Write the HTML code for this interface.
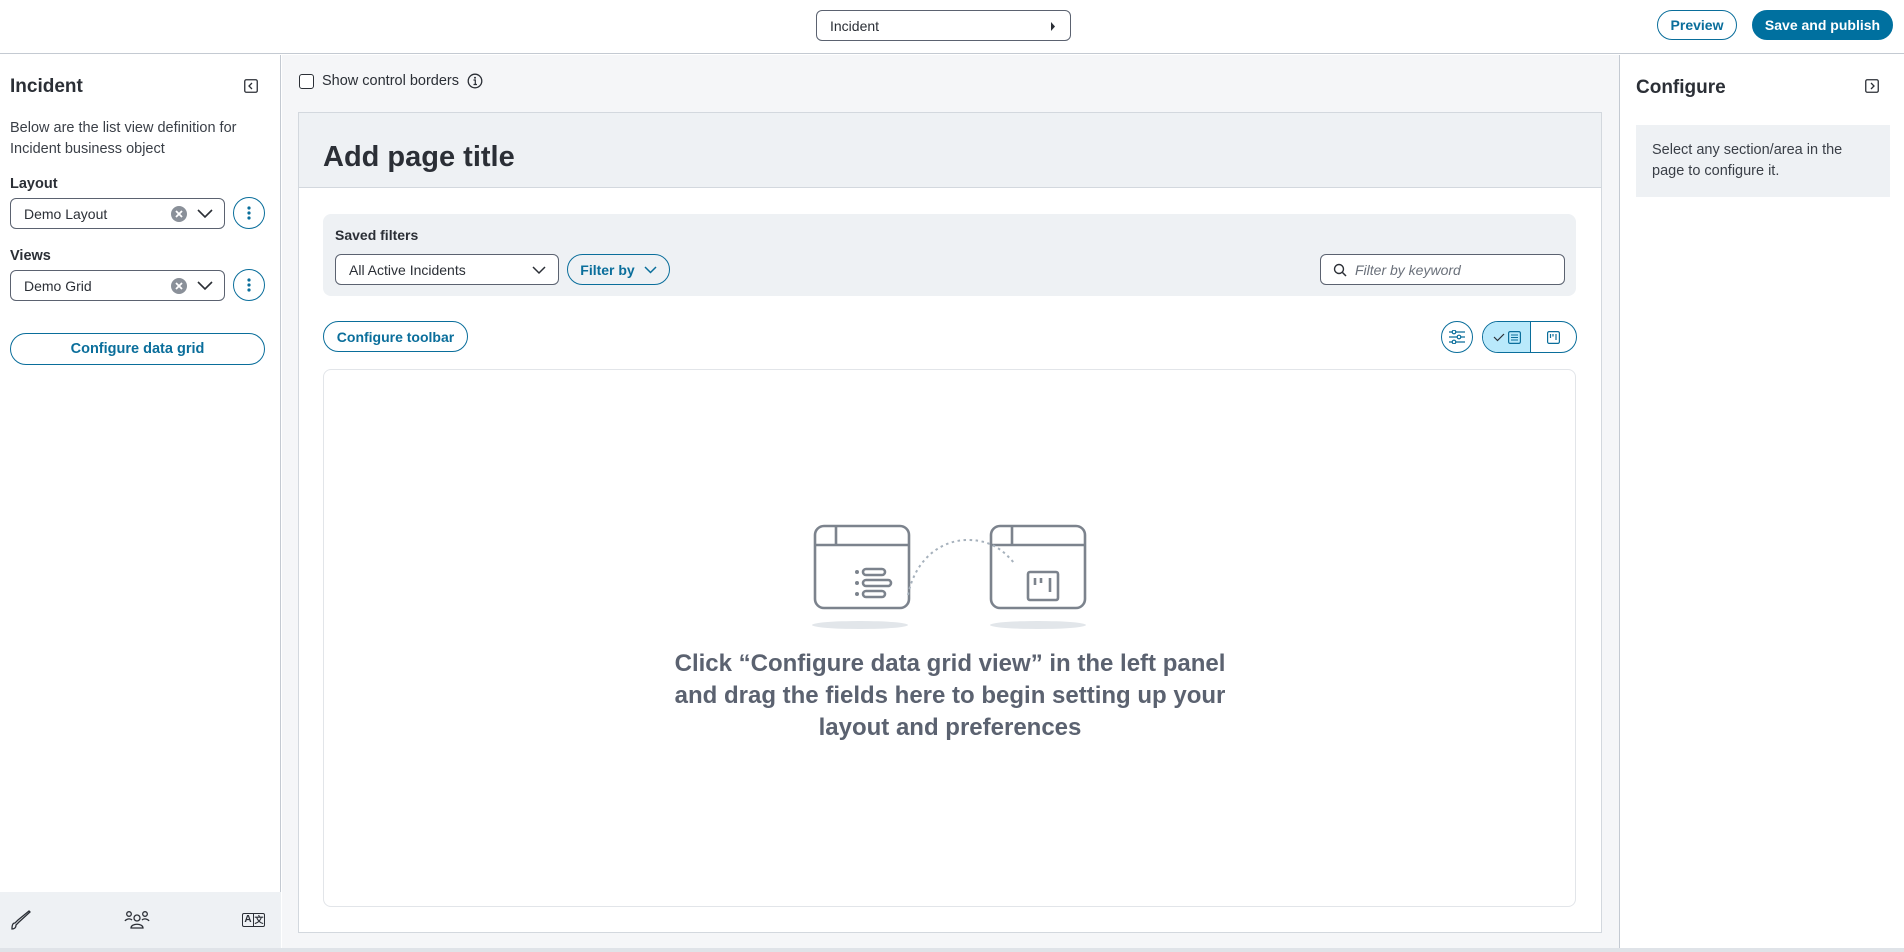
<!DOCTYPE html>
<html><head><meta charset="utf-8"><style>
*{box-sizing:border-box;margin:0;padding:0}
body{width:1904px;height:952px;overflow:hidden;font-family:"Liberation Sans",sans-serif;color:#2b2f36;background:#fff;position:relative}
.abs{position:absolute}
.btn{position:absolute;border:1.5px solid #0a6e9b;border-radius:20px;color:#0a6e9b;font-weight:bold;font-size:14px;display:flex;align-items:center;justify-content:center;background:#fff}
.sel{position:absolute;border:1px solid #5b6270;border-radius:6px;background:#fff;font-size:14px;display:flex;align-items:center;padding-left:13px}
.kebab{position:absolute;width:32px;height:32px;border:1.5px solid #0a6e9b;border-radius:50%;display:flex;align-items:center;justify-content:center}
</style></head><body>
<div class="abs" style="left:0;top:0;width:1904px;height:54px;border-bottom:1.5px solid #c4cad2;background:#fff"></div>
<div class="sel" style="left:816px;top:10px;width:255px;height:31px;font-size:14px">Incident<svg class="abs" style="right:14px;top:11px" width="6" height="9"><path d="M1 0L5 4.5L1 9Z" fill="#2b2f36"/></svg></div>
<div class="btn" style="left:1657px;top:10px;width:80px;height:30px">Preview</div>
<div class="btn" style="left:1752px;top:10px;width:141px;height:30px;background:#00709f;border-color:#00709f;color:#fff">Save and publish</div>

<div class="abs" style="left:0;top:55px;width:281px;height:897px;border-right:1.5px solid #c4cad2;background:#fff"></div>
<div class="abs" style="left:10px;top:76px;font-size:19px;font-weight:bold">Incident</div>
<svg class="abs" style="left:244px;top:79px" width="14" height="14"><rect x="0.75" y="0.75" width="12.5" height="12.5" rx="1.5" fill="none" stroke="#2b2f36" stroke-width="1.3"/><path d="M8 4L5 7L8 10" fill="none" stroke="#2b2f36" stroke-width="1.3"/></svg>
<div class="abs" style="left:10px;top:118px;width:260px;font-size:14.5px;line-height:21px;color:#3a3f47">Below are the list view definition for Incident business object</div>
<div class="abs" style="left:10px;top:176px;font-size:14.5px;font-weight:bold">Layout</div>
<div class="sel" style="left:10px;top:198px;width:215px;height:31px">Demo Layout
<svg class="abs" style="left:160px;top:7px" width="16" height="16"><circle cx="8" cy="8" r="8" fill="#8a9099"/><path d="M5 5L11 11M11 5L5 11" stroke="#fff" stroke-width="1.8"/></svg>
<svg class="abs" style="left:186px;top:10px" width="16" height="10"><path d="M1 1L8 8L15 1" fill="none" stroke="#2b2f36" stroke-width="1.6"/></svg></div>
<div class="kebab" style="left:233px;top:197px"><svg width="4" height="14"><circle cx="2" cy="2" r="1.6" fill="#0a6e9b"/><circle cx="2" cy="7" r="1.6" fill="#0a6e9b"/><circle cx="2" cy="12" r="1.6" fill="#0a6e9b"/></svg></div>
<div class="abs" style="left:10px;top:248px;font-size:14.5px;font-weight:bold">Views</div>
<div class="sel" style="left:10px;top:270px;width:215px;height:31px">Demo Grid
<svg class="abs" style="left:160px;top:7px" width="16" height="16"><circle cx="8" cy="8" r="8" fill="#8a9099"/><path d="M5 5L11 11M11 5L5 11" stroke="#fff" stroke-width="1.8"/></svg>
<svg class="abs" style="left:186px;top:10px" width="16" height="10"><path d="M1 1L8 8L15 1" fill="none" stroke="#2b2f36" stroke-width="1.6"/></svg></div>
<div class="kebab" style="left:233px;top:269px"><svg width="4" height="14"><circle cx="2" cy="2" r="1.6" fill="#0a6e9b"/><circle cx="2" cy="7" r="1.6" fill="#0a6e9b"/><circle cx="2" cy="12" r="1.6" fill="#0a6e9b"/></svg></div>
<div class="btn" style="left:10px;top:333px;width:255px;height:32px;font-size:14.5px">Configure data grid</div>
<div class="abs" style="left:0;top:892px;width:281px;height:56px;background:#eef1f4"></div>
<svg class="abs" style="left:10px;top:910px" width="22" height="20"><path d="M2 19C4 19 6 18 6 15L9 12L20 2L19 1L8 10L5 13C2 13 2 17 2 19Z" fill="none" stroke="#2b2f36" stroke-width="1.3"/></svg>
<svg class="abs" style="left:124px;top:910px" width="26" height="20"><circle cx="13" cy="8" r="3" fill="none" stroke="#2b2f36" stroke-width="1.3"/><circle cx="5" cy="4" r="2.3" fill="none" stroke="#2b2f36" stroke-width="1.3"/><circle cx="21" cy="4" r="2.3" fill="none" stroke="#2b2f36" stroke-width="1.3"/><path d="M7 18C7 13 19 13 19 18Z M1 11C2 9 6 8 8 10 M25 11C24 9 20 8 18 10" fill="none" stroke="#2b2f36" stroke-width="1.3"/></svg>
<div class="abs" style="left:242px;top:913px;width:23px;height:14px;border:1.3px solid #2b2f36;border-radius:2px;font-size:10px;font-weight:bold;line-height:12px;display:flex"><span style="width:11px;text-align:center;border-right:1.3px solid #2b2f36">A</span><span style="width:10px;text-align:center;font-size:9px">文</span></div>

<div class="abs" style="left:282px;top:55px;width:1337px;height:897px;background:#f5f6f8"></div>
<div class="abs" style="left:299px;top:74px;width:15px;height:15px;border:1.3px solid #2b2f36;border-radius:3px;background:#fff"></div>
<div class="abs" style="left:322px;top:73px;font-size:14.5px;color:#2b2f36">Show control borders</div>
<svg class="abs" style="left:467px;top:73px" width="16" height="16"><circle cx="8" cy="8" r="6.8" fill="none" stroke="#2b2f36" stroke-width="1.3"/><circle cx="8" cy="4.8" r="1" fill="#2b2f36"/><path d="M6.5 7H8.3V11.5M6.5 11.5H10" fill="none" stroke="#2b2f36" stroke-width="1.2"/></svg>
<div class="abs" style="left:298px;top:112px;width:1304px;height:821px;border:1.5px solid #d3d8de;background:#fff"></div>
<div class="abs" style="left:299px;top:113px;width:1302px;height:75px;background:#eef1f4;border-bottom:1.5px solid #d3d8de"></div>
<div class="abs" style="left:323px;top:141px;font-size:29px;font-weight:bold;color:#2b2f36">Add page title</div>
<div class="abs" style="left:323px;top:214px;width:1253px;height:82px;background:#eef1f4;border-radius:8px"></div>
<div class="abs" style="left:335px;top:227px;font-size:14px;font-weight:bold">Saved filters</div>
<div class="sel" style="left:335px;top:254px;width:224px;height:31px">All Active Incidents<svg class="abs" style="left:196px;top:11px" width="14" height="9"><path d="M1 1L7 7L13 1" fill="none" stroke="#2b2f36" stroke-width="1.5"/></svg></div>
<div class="btn" style="left:567px;top:254px;width:103px;height:31px;background:transparent">Filter by<svg style="margin-left:9px" width="13" height="8"><path d="M1 1L6.5 6.5L12 1" fill="none" stroke="#0a6e9b" stroke-width="1.5"/></svg></div>
<div class="sel" style="left:1320px;top:254px;width:245px;height:31px;padding-left:12px;color:#6a707a;font-style:italic"><svg width="14" height="14" style="margin-right:8px"><circle cx="6" cy="6" r="4.5" fill="none" stroke="#2b2f36" stroke-width="1.4"/><path d="M9.5 9.5L13 13" stroke="#2b2f36" stroke-width="1.5"/></svg>Filter by keyword</div>
<div class="btn" style="left:323px;top:321px;width:145px;height:31px">Configure toolbar</div>
<div class="kebab" style="left:1441px;top:321px;width:32px;height:32px"><svg width="16" height="14"><path d="M0 2H16M0 7H16M0 12H16" stroke="#0a6e9b" stroke-width="1.2"/><circle cx="5" cy="2" r="1.8" fill="#fff" stroke="#0a6e9b" stroke-width="1.2"/><circle cx="10" cy="7" r="1.8" fill="#fff" stroke="#0a6e9b" stroke-width="1.2"/><circle cx="5" cy="12" r="1.8" fill="#fff" stroke="#0a6e9b" stroke-width="1.2"/></svg></div>
<div class="abs" style="left:1482px;top:321px;width:95px;height:32px;border:1.5px solid #0a6e9b;border-radius:16px;overflow:hidden;display:flex">
<div style="width:48px;background:#b9e9fb;border-right:1.5px solid #0a6e9b;display:flex;align-items:center;justify-content:center;gap:3px"><svg width="12" height="9"><path d="M1 4L4.5 7.5L11 1" fill="none" stroke="#2b2f36" stroke-width="1.2"/></svg><svg width="13" height="13"><rect x="0.6" y="0.6" width="11.8" height="11.8" rx="1.5" fill="none" stroke="#0a6e9b" stroke-width="1.2"/><path d="M3 4H10M3 6.5H10M3 9H10" stroke="#0a6e9b" stroke-width="1"/></svg></div>
<div style="flex:1;display:flex;align-items:center;justify-content:center"><svg width="13" height="13"><rect x="0.6" y="0.6" width="11.8" height="11.8" rx="1.5" fill="none" stroke="#0a6e9b" stroke-width="1.2"/><path d="M3.5 3V7M6 3V5.5M9 3V9" stroke="#0a6e9b" stroke-width="1.2"/></svg></div></div>
<div class="abs" style="left:323px;top:369px;width:1253px;height:538px;border:1.3px solid #e2e5e9;border-radius:8px;background:#fff"></div>
<svg class="abs" style="left:810px;top:520px" width="285" height="115">
<g fill="none" stroke="#7c838d" stroke-width="2.6">
<rect x="5" y="6" width="94" height="82" rx="9"/><path d="M5 25H99M26 6V25"/>
<rect x="181" y="6" width="94" height="82" rx="9"/><path d="M181 25H275M202 6V25"/>
<rect x="53" y="49" width="22" height="6" rx="3"/><rect x="53" y="60" width="28" height="6" rx="3"/><rect x="53" y="71" width="22" height="6" rx="3"/>
<rect x="218" y="52" width="30" height="28" rx="2"/><path d="M225 58V65M231 58V63M240 58V72"/>
</g>
<g fill="#7c838d"><circle cx="47" cy="52" r="2"/><circle cx="47" cy="63" r="2"/><circle cx="47" cy="74" r="2"/></g>
<path d="M98 75C105 40 130 20 158 20C185 20 197 35 205 44" fill="none" stroke="#a6b1bc" stroke-width="2" stroke-dasharray="2.5 3.5"/>
<ellipse cx="50" cy="105" rx="48" ry="4" fill="#e2e6ea"/><ellipse cx="228" cy="105" rx="48" ry="4" fill="#e2e6ea"/>
</svg>
<div class="abs" style="left:660px;top:648px;width:580px;text-align:center;font-size:24px;font-weight:bold;line-height:32px;color:#5b6270">Click “Configure data grid view” in the left panel and drag the fields here to begin setting up your layout and preferences</div>

<div class="abs" style="left:1619px;top:55px;width:285px;height:897px;border-left:1.5px solid #c4cad2;background:#fff"></div>
<div class="abs" style="left:1636px;top:77px;font-size:19px;font-weight:bold">Configure</div>
<svg class="abs" style="left:1865px;top:79px" width="14" height="14"><rect x="0.75" y="0.75" width="12.5" height="12.5" rx="1.5" fill="none" stroke="#2b2f36" stroke-width="1.3"/><path d="M6 4L9 7L6 10" fill="none" stroke="#2b2f36" stroke-width="1.3"/></svg>
<div class="abs" style="left:1636px;top:125px;width:254px;height:72px;background:#eef1f4;padding:15px 16px;font-size:14.5px;line-height:21px;color:#3a3f47">Select any section/area in the page to configure it.</div>
<div class="abs" style="left:0;top:948px;width:1904px;height:4px;background:#dfe3e8"></div>
</body></html>
